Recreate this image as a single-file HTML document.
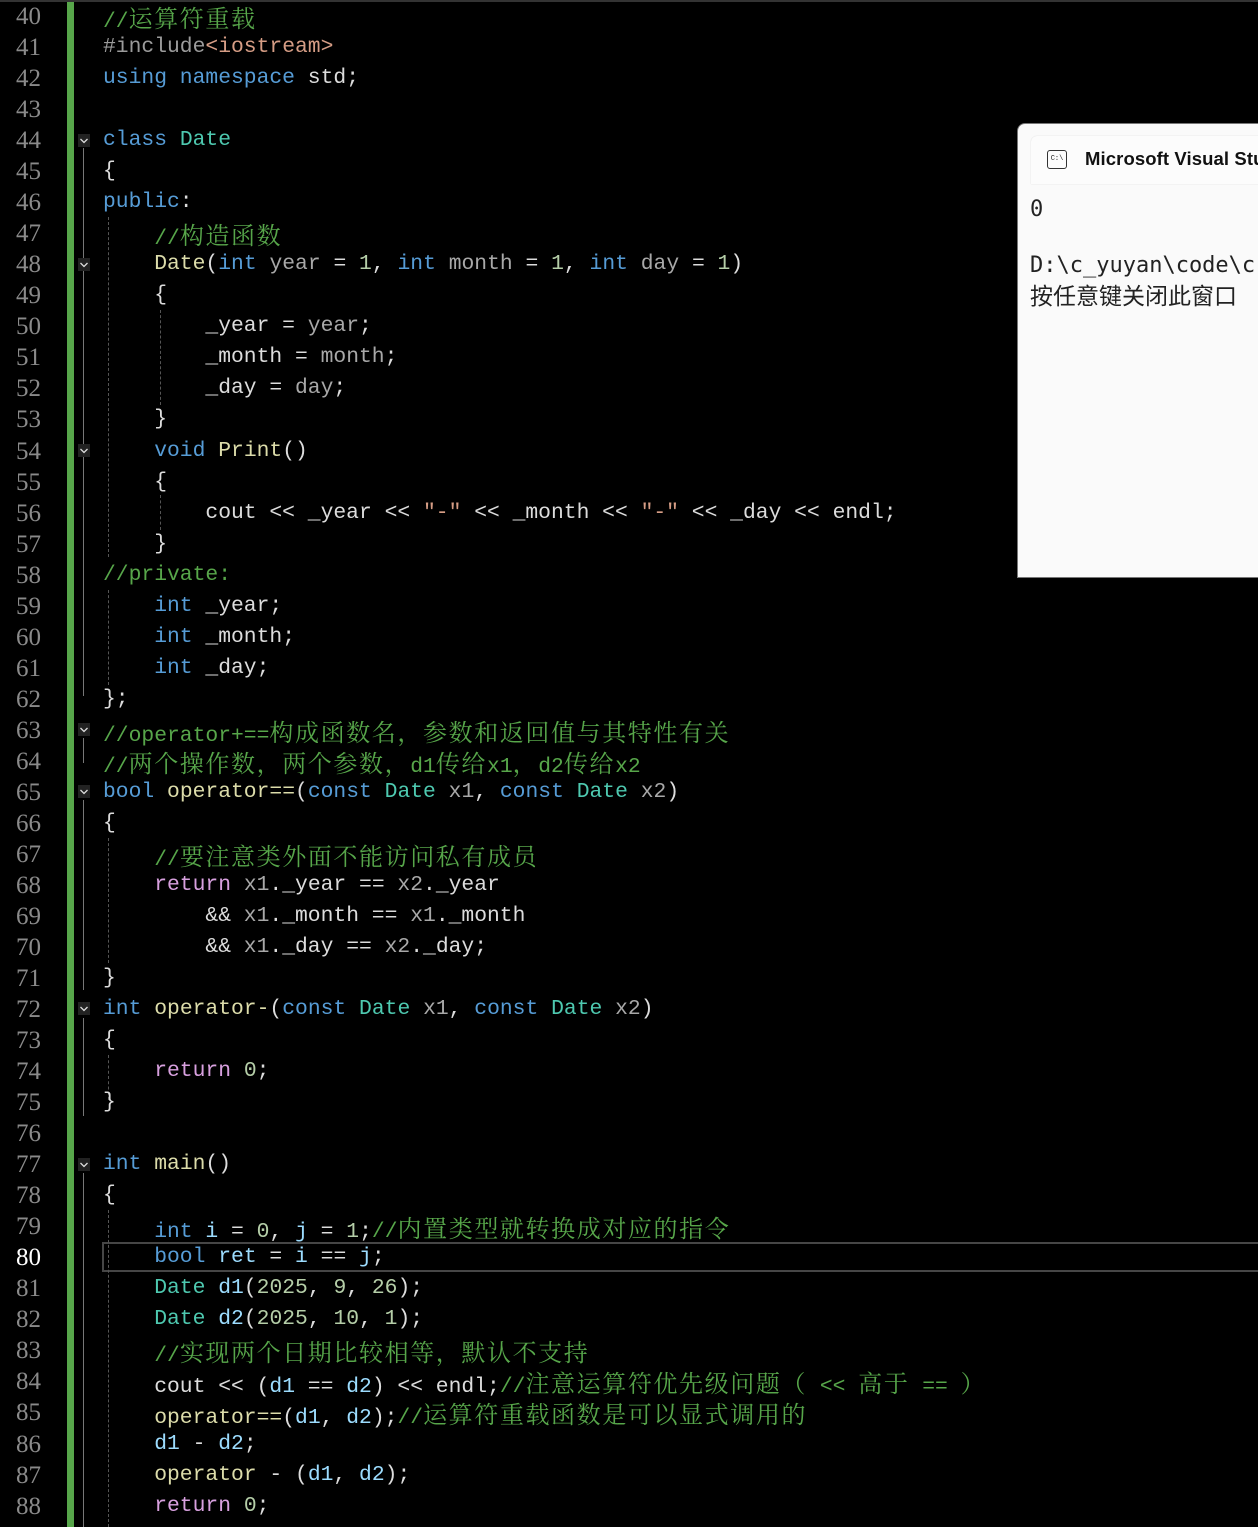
<!DOCTYPE html>
<html><head><meta charset="utf-8"><style>
html,body{margin:0;padding:0;background:#000;width:1258px;height:1527px;overflow:hidden;position:relative}
.l{position:absolute;left:103px;height:31px;line-height:31px;white-space:pre;font-family:"Liberation Mono","Noto Serif CJK SC",monospace;font-size:21.33px;color:#dcdcdc;margin-top:1px}
.z{font-family:"Noto Serif CJK SC","Noto Sans CJK SC",serif;font-size:24px;letter-spacing:1.6px}
.ln{position:absolute;left:0;width:41px;text-align:right;height:31px;line-height:31px;font-family:"Liberation Serif",serif;font-size:25px;color:#8a8a8a;margin-top:1px}
.k{color:#569cd6}.t{color:#4ec9b0}.f{color:#dcdcaa}.v{color:#9cdcfe}.p{color:#a8a8a8}.c{color:#57a64a}.n{color:#b5cea8}.r{color:#d8a0df}.s{color:#d69d85}
.fold{position:absolute;left:78px;width:12px;height:13px;background:#222}
.vl{position:absolute;left:83px;width:1px;background:#777}
.g{position:absolute;width:0;border-left:1px dashed #555}
</style></head><body>
<div style="position:absolute;left:0;top:0;width:1258px;height:2px;background:#333"></div>
<div style="position:absolute;left:67px;top:2px;width:7px;height:1525px;background:#57a64a"></div>

<div style="position:absolute;left:102px;top:1242px;width:1160px;height:26px;border:2px solid #464646"></div>

<div class="vl" style="top:148px;height:548px"></div>
<div class="vl" style="top:738px;height:25px"></div>
<div class="vl" style="top:800px;height:190px"></div>
<div class="vl" style="top:1018px;height:98px"></div>
<div class="vl" style="top:1173px;height:354px"></div>
<div class="g" style="left:108px;top:217px;height:340px"></div>
<div class="g" style="left:108px;top:590px;height:95px"></div>
<div class="g" style="left:160px;top:310px;height:95px"></div>
<div class="g" style="left:160px;top:495px;height:35px"></div>
<div class="g" style="left:108px;top:838px;height:125px"></div>
<div class="g" style="left:108px;top:1055px;height:45px"></div>
<div class="g" style="left:108px;top:1210px;height:317px"></div>

<svg width="0" height="0" style="position:absolute"><defs><symbol id="ch" viewBox="0 0 12 13"><path d="M2.5 5 L6 8.5 L9.5 5" fill="none" stroke="#ddd" stroke-width="1.3"/></symbol></defs></svg>
<svg class="fold" style="top:134px"><use href="#ch"/></svg>
<svg class="fold" style="top:258px"><use href="#ch"/></svg>
<svg class="fold" style="top:444px"><use href="#ch"/></svg>
<svg class="fold" style="top:723px"><use href="#ch"/></svg>
<svg class="fold" style="top:785px"><use href="#ch"/></svg>
<svg class="fold" style="top:1002px"><use href="#ch"/></svg>
<svg class="fold" style="top:1158px"><use href="#ch"/></svg>

<div class="ln" style="top:0px">40</div><div class="ln" style="top:31px">41</div><div class="ln" style="top:62px">42</div><div class="ln" style="top:93px">43</div><div class="ln" style="top:124px">44</div><div class="ln" style="top:155px">45</div><div class="ln" style="top:186px">46</div><div class="ln" style="top:217px">47</div><div class="ln" style="top:248px">48</div><div class="ln" style="top:279px">49</div><div class="ln" style="top:310px">50</div><div class="ln" style="top:341px">51</div><div class="ln" style="top:372px">52</div><div class="ln" style="top:403px">53</div><div class="ln" style="top:435px">54</div><div class="ln" style="top:466px">55</div><div class="ln" style="top:497px">56</div><div class="ln" style="top:528px">57</div><div class="ln" style="top:559px">58</div><div class="ln" style="top:590px">59</div><div class="ln" style="top:621px">60</div><div class="ln" style="top:652px">61</div><div class="ln" style="top:683px">62</div><div class="ln" style="top:714px">63</div><div class="ln" style="top:745px">64</div><div class="ln" style="top:776px">65</div><div class="ln" style="top:807px">66</div><div class="ln" style="top:838px">67</div><div class="ln" style="top:869px">68</div><div class="ln" style="top:900px">69</div><div class="ln" style="top:931px">70</div><div class="ln" style="top:962px">71</div><div class="ln" style="top:993px">72</div><div class="ln" style="top:1024px">73</div><div class="ln" style="top:1055px">74</div><div class="ln" style="top:1086px">75</div><div class="ln" style="top:1117px">76</div><div class="ln" style="top:1148px">77</div><div class="ln" style="top:1179px">78</div><div class="ln" style="top:1210px">79</div><div class="ln" style="top:1241px;color:#fff">80</div><div class="ln" style="top:1272px">81</div><div class="ln" style="top:1303px">82</div><div class="ln" style="top:1334px">83</div><div class="ln" style="top:1365px">84</div><div class="ln" style="top:1396px">85</div><div class="ln" style="top:1428px">86</div><div class="ln" style="top:1459px">87</div><div class="ln" style="top:1490px">88</div>

<div class="l" style="top:0px"><span class="c">//<span class="z">运算符重载</span></span></div>
<div class="l" style="top:31px"><span style="color:#9b9b9b">#include</span><span class="s">&lt;iostream&gt;</span></div>
<div class="l" style="top:62px"><span class="k">using namespace</span> std;</div>
<div class="l" style="top:124px"><span class="k">class</span> <span class="t">Date</span></div>
<div class="l" style="top:155px">{</div>
<div class="l" style="top:186px"><span class="k">public</span>:</div>
<div class="l" style="top:217px">    <span class="c">//<span class="z">构造函数</span></span></div>
<div class="l" style="top:248px">    <span class="f">Date</span>(<span class="k">int</span> <span class="p">year</span> = <span class="n">1</span>, <span class="k">int</span> <span class="p">month</span> = <span class="n">1</span>, <span class="k">int</span> <span class="p">day</span> = <span class="n">1</span>)</div>
<div class="l" style="top:279px">    {</div>
<div class="l" style="top:310px">        _year = <span class="p">year</span>;</div>
<div class="l" style="top:341px">        _month = <span class="p">month</span>;</div>
<div class="l" style="top:372px">        _day = <span class="p">day</span>;</div>
<div class="l" style="top:403px">    }</div>
<div class="l" style="top:435px">    <span class="k">void</span> <span class="f">Print</span>()</div>
<div class="l" style="top:466px">    {</div>
<div class="l" style="top:497px">        cout &lt;&lt; _year &lt;&lt; <span class="s">"-"</span> &lt;&lt; _month &lt;&lt; <span class="s">"-"</span> &lt;&lt; _day &lt;&lt; endl;</div>
<div class="l" style="top:528px">    }</div>
<div class="l" style="top:559px"><span class="c">//private:</span></div>
<div class="l" style="top:590px">    <span class="k">int</span> _year;</div>
<div class="l" style="top:621px">    <span class="k">int</span> _month;</div>
<div class="l" style="top:652px">    <span class="k">int</span> _day;</div>
<div class="l" style="top:683px">};</div>
<div class="l" style="top:714px"><span class="c">//operator+==<span class="z">构成函数名，参数和返回值与其特性有关</span></span></div>
<div class="l" style="top:745px"><span class="c">//<span class="z">两个操作数，两个参数，</span>d1<span class="z">传给</span>x1<span class="z">，</span>d2<span class="z">传给</span>x2</span></div>
<div class="l" style="top:776px"><span class="k">bool</span> <span class="f">operator==</span>(<span class="k">const</span> <span class="t">Date</span> <span class="p">x1</span>, <span class="k">const</span> <span class="t">Date</span> <span class="p">x2</span>)</div>
<div class="l" style="top:807px">{</div>
<div class="l" style="top:838px">    <span class="c">//<span class="z">要注意类外面不能访问私有成员</span></span></div>
<div class="l" style="top:869px">    <span class="r">return</span> <span class="p">x1</span>._year == <span class="p">x2</span>._year</div>
<div class="l" style="top:900px">        &amp;&amp; <span class="p">x1</span>._month == <span class="p">x1</span>._month</div>
<div class="l" style="top:931px">        &amp;&amp; <span class="p">x1</span>._day == <span class="p">x2</span>._day;</div>
<div class="l" style="top:962px">}</div>
<div class="l" style="top:993px"><span class="k">int</span> <span class="f">operator-</span>(<span class="k">const</span> <span class="t">Date</span> <span class="p">x1</span>, <span class="k">const</span> <span class="t">Date</span> <span class="p">x2</span>)</div>
<div class="l" style="top:1024px">{</div>
<div class="l" style="top:1055px">    <span class="r">return</span> <span class="n">0</span>;</div>
<div class="l" style="top:1086px">}</div>
<div class="l" style="top:1148px"><span class="k">int</span> <span class="f">main</span>()</div>
<div class="l" style="top:1179px">{</div>
<div class="l" style="top:1210px">    <span class="k">int</span> <span class="v">i</span> = <span class="n">0</span>, <span class="v">j</span> = <span class="n">1</span>;<span class="c">//<span class="z">内置类型就转换成对应的指令</span></span></div>
<div class="l" style="top:1241px">    <span class="k">bool</span> <span class="v">ret</span> = <span class="v">i</span> == <span class="v">j</span>;</div>
<div class="l" style="top:1272px">    <span class="t">Date</span> <span class="v">d1</span>(<span class="n">2025</span>, <span class="n">9</span>, <span class="n">26</span>);</div>
<div class="l" style="top:1303px">    <span class="t">Date</span> <span class="v">d2</span>(<span class="n">2025</span>, <span class="n">10</span>, <span class="n">1</span>);</div>
<div class="l" style="top:1334px">    <span class="c">//<span class="z">实现两个日期比较相等，默认不支持</span></span></div>
<div class="l" style="top:1365px">    cout &lt;&lt; (<span class="v">d1</span> == <span class="v">d2</span>) &lt;&lt; endl;<span class="c">//<span class="z">注意运算符优先级问题（</span> &lt;&lt; <span class="z">高于</span> == <span class="z">）</span></span></div>
<div class="l" style="top:1396px">    <span class="f">operator==</span>(<span class="v">d1</span>, <span class="v">d2</span>);<span class="c">//<span class="z">运算符重载函数是可以显式调用的</span></span></div>
<div class="l" style="top:1428px">    <span class="v">d1</span> - <span class="v">d2</span>;</div>
<div class="l" style="top:1459px">    <span class="f">operator</span> - (<span class="v">d1</span>, <span class="v">d2</span>);</div>
<div class="l" style="top:1490px">    <span class="r">return</span> <span class="n">0</span>;</div>

<div style="position:absolute;left:1017px;top:123px;width:260px;height:453px;background:#fafafa;border:1px solid #777;border-radius:8px 0 0 0">
  <div style="position:absolute;left:13px;top:12px;width:260px;height:48px;background:#fcfcfc;border-radius:6px 0 0 0;box-shadow:0 0 1px #ccc"></div>
  <div style="position:absolute;left:29px;top:26px;width:20px;height:19px;border:1.5px solid #333;border-radius:3px;box-sizing:border-box;font:7px 'Liberation Mono',monospace;line-height:16px;text-align:center;color:#222">C:\</div>
  <div style="position:absolute;left:67px;top:24px;font:bold 18.5px 'Liberation Sans',sans-serif;color:#111;white-space:nowrap;letter-spacing:0.1px">Microsoft Visual Studio</div>
  <div style="position:absolute;left:12px;top:72px;font:22px 'DejaVu Sans Mono',monospace;color:#222;white-space:pre;line-height:28px">0

D:\c_yuyan\code\c
<span style="font-family:'Noto Sans CJK SC',sans-serif;font-size:23px">按任意键关闭此窗口</span></div>
</div>
</body></html>
